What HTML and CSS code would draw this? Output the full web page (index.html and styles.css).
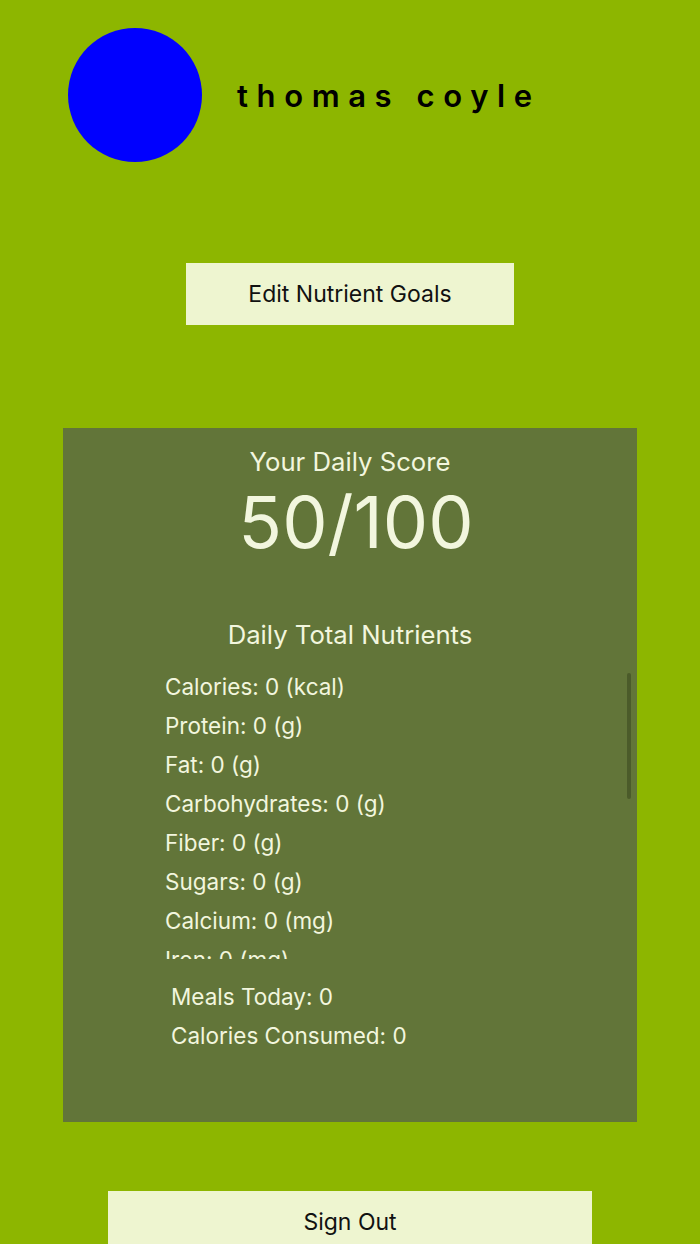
FILE: index.html
```html
<!DOCTYPE html>
<html>
<head>
<meta charset="utf-8">
<link rel="stylesheet" href="styles.css">
</head>
<body>
<div class="page">
  <div class="header">
    <div class="avatar"></div>
    <div class="name">thomas coyle</div>
  </div>
  <div class="btn edit">Edit Nutrient Goals</div>
  <div class="card">
    <div class="score-title">Your Daily Score</div>
    <div class="score">50/100</div>
    <div class="nutr-title">Daily Total Nutrients</div>
    <div class="list-wrap">
      <div class="list">
        <div class="row">Calories: 0 (kcal)</div>
        <div class="row">Protein: 0 (g)</div>
        <div class="row">Fat: 0 (g)</div>
        <div class="row">Carbohydrates: 0 (g)</div>
        <div class="row">Fiber: 0 (g)</div>
        <div class="row">Sugars: 0 (g)</div>
        <div class="row">Calcium: 0 (mg)</div>
        <div class="row">Iron: 0 (mg)</div>
      </div>
      <div class="scrollbar"></div>
    </div>
    <div class="summary">
      <div class="row">Meals Today: 0</div>
      <div class="row">Calories Consumed: 0</div>
    </div>
  </div>
  <div class="btn signout">Sign Out</div>
</div>
</body>
</html>
```

FILE: styles.css
```css
html, body {
  margin: 0;
  padding: 0;
  background: #8db600;
  font-family: Inter, "Noto Sans", "Liberation Sans", sans-serif;
}
.page {
  width: 700px;
  height: 1244px;
  overflow: hidden;
}
.header {
  display: flex;
  align-items: center;
  padding: 28px 0 0 68px;
}
.avatar {
  width: 134px;
  height: 134px;
  border-radius: 50%;
  background: #0000ff;
  flex: none;
}
.name {
  margin-left: 35px;
  font-size: 31px;
  font-weight: 600;
  letter-spacing: 8.6px;
  color: #000;
}
.btn {
  background: #eef5d0;
  color: #111;
  font-size: 23px;
  display: flex;
  align-items: center;
  justify-content: center;
}
.edit {
  width: 328px;
  height: 62px;
  margin: 101px auto 0;
}
.card {
  margin: 103px 63px 0;
  height: 694px;
  background: #627539;
  color: #f2f6de;
  display: flex;
  flex-direction: column;
}
.score-title {
  margin-top: 19px;
  text-align: center;
  font-size: 25.7px;
  line-height: 30px;
}
.score {
  text-align: center;
  font-size: 72px;
  line-height: 80px;
  margin-top: 5px;
  padding-left: 12px;
}
.nutr-title {
  margin-top: 58px;
  text-align: center;
  font-size: 25.7px;
  line-height: 30px;
}
.list-wrap {
  position: relative;
  margin-top: 17px;
  height: 292px;
}
.list {
  height: 292px;
  overflow: hidden;
  padding-left: 102px;
}
.row {
  font-size: 22.5px;
  line-height: 39px;
  white-space: nowrap;
}
.scrollbar {
  position: absolute;
  right: 6px;
  top: 6px;
  width: 4px;
  height: 126px;
  border-radius: 2px;
  background: #4b5b2a;
}
.summary {
  margin-top: 18px;
  padding-left: 108px;
}
.signout {
  width: 484px;
  height: 62px;
  margin: 69px auto 0;
}
```
